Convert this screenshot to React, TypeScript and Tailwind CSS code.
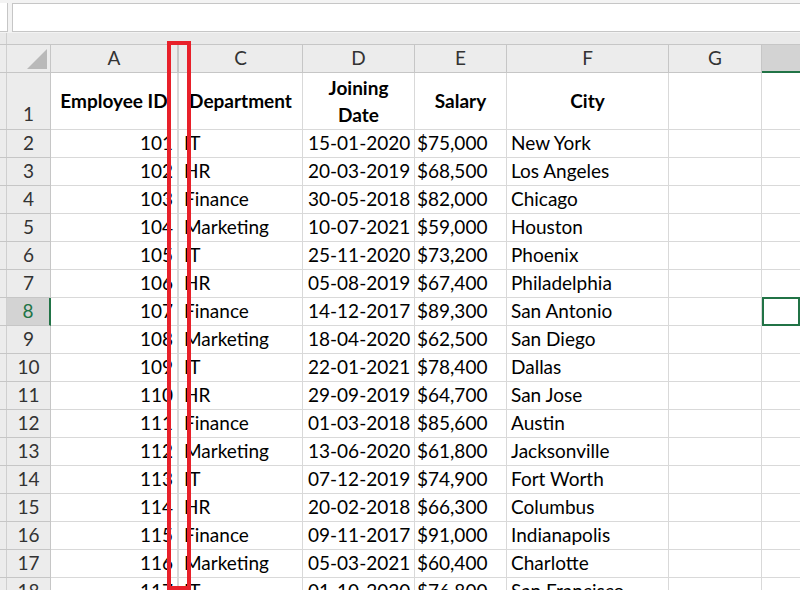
const rows: [number, number, string, string, string, string][] = [
  [2, 101, 'IT', '15-01-2020', '$75,000', 'New York'],
  [3, 102, 'HR', '20-03-2019', '$68,500', 'Los Angeles'],
  [4, 103, 'Finance', '30-05-2018', '$82,000', 'Chicago'],
  [5, 104, 'Marketing', '10-07-2021', '$59,000', 'Houston'],
  [6, 105, 'IT', '25-11-2020', '$73,200', 'Phoenix'],
  [7, 106, 'HR', '05-08-2019', '$67,400', 'Philadelphia'],
  [8, 107, 'Finance', '14-12-2017', '$89,300', 'San Antonio'],
  [9, 108, 'Marketing', '18-04-2020', '$62,500', 'San Diego'],
  [10, 109, 'IT', '22-01-2021', '$78,400', 'Dallas'],
  [11, 110, 'HR', '29-09-2019', '$64,700', 'San Jose'],
  [12, 111, 'Finance', '01-03-2018', '$85,600', 'Austin'],
  [13, 112, 'Marketing', '13-06-2020', '$61,800', 'Jacksonville'],
  [14, 113, 'IT', '07-12-2019', '$74,900', 'Fort Worth'],
  [15, 114, 'HR', '20-02-2018', '$66,300', 'Columbus'],
  [16, 115, 'Finance', '09-11-2017', '$91,000', 'Indianapolis'],
  [17, 116, 'Marketing', '05-03-2021', '$60,400', 'Charlotte'],
  [18, 117, 'IT', '01-10-2020', '$76,800', 'San Francisco'],
]

const cell = 'border-r border-b border-[#d9d9d9] flex items-center overflow-visible whitespace-nowrap'
const colHead = 'border-r border-b border-[#c6c6c6] flex items-center justify-center text-[#333]'

export default function App() {
  return (
    <div
      className="relative w-[800px] h-[590px] overflow-hidden bg-white text-[19px] text-black"
      style={{ fontFamily: 'Lato, "Open Sans", sans-serif' }}
    >
      {/* formula bar */}
      <div className="flex h-[33px] bg-[#f3f3f3] pt-[3px]">
        <div className="w-[8px] h-[29px] bg-white border-r border-b border-[#c6c6c6]" />
        <div className="ml-[4px] flex-1 h-[29px] bg-white border-l border-t border-b border-[#c6c6c6]" />
      </div>
      <div className="h-[11px] bg-[#e9e9e9] flex">
        <div className="w-[7px] border-r border-[#cfcfcf]" />
      </div>

      {/* sheet grid */}
      <div className="grid grid-cols-[51px_127px_125px_112px_92px_162px_93px_1fr] grid-rows-[28px_57px_repeat(17,28px)] border-t border-[#c6c6c6]">
        {/* column headers */}
        <div className="bg-[#ececec] border-r border-b border-[#c6c6c6] flex">
          <div className="w-[7px] border-r border-[#cfcfcf]" />
          <div className="flex-1 flex items-end justify-end pr-[3px] pb-[3px]">
            <svg width="20" height="20" viewBox="0 0 20 20">
              <polygon points="20,0 20,20 0,20" fill="#b9b9b9" />
            </svg>
          </div>
        </div>
        <div className={`${colHead} bg-[#ececec]`}>A</div>
        <div className={`${colHead} bg-[#ececec] border-l`}>C</div>
        <div className={`${colHead} bg-[#ececec]`}>D</div>
        <div className={`${colHead} bg-[#ececec]`}>E</div>
        <div className={`${colHead} bg-[#ececec]`}>F</div>
        <div className={`${colHead} bg-[#ececec]`}>G</div>
        <div className="bg-[#d3d3d3] border-b-2 border-[#217346]" />

        {/* row 1 */}
        <div className="bg-[#ececec] border-r border-b border-[#c6c6c6] flex">
          <div className="w-[7px] border-r border-[#cfcfcf]" />
          <div className="flex-1 flex items-end justify-center pb-[1px] text-[#333]">1</div>
        </div>
        <div className={`${cell} justify-center font-bold`}>Employee ID</div>
        <div className={`${cell} border-l justify-center font-bold`}>Department</div>
        <div className={`${cell} justify-center font-bold text-center leading-[27px]`}>
          Joining
          <br />
          Date
        </div>
        <div className={`${cell} justify-center font-bold`}>Salary</div>
        <div className={`${cell} justify-center font-bold`}>City</div>
        <div className={cell} />
        <div className="border-b border-[#d9d9d9]" />

        {rows.map(([n, id, dept, date, salary, city]) => {
          const sel = n === 8
          return [
            <div
              key={`h${n}`}
              className={`border-b border-[#c6c6c6] flex ${sel ? 'bg-[#d3d3d3] border-r-2 border-r-[#217346] text-[#217346]' : 'bg-[#ececec] border-r text-[#333]'}`}
            >
              <div className="w-[7px] border-r border-[#cfcfcf] bg-[#ececec]" />
              <div className="flex-1 flex items-center justify-center">{n}</div>
            </div>,
            <div key={`a${n}`} className={`${cell} justify-end pr-[4px]`}>{id}</div>,
            <div key={`c${n}`} className={`${cell} border-l pl-[5px]`}>{dept}</div>,
            <div key={`d${n}`} className={`${cell} pl-[5px]`}>{date}</div>,
            <div key={`e${n}`} className={`${cell} pl-[2px]`}>{salary}</div>,
            <div key={`f${n}`} className={`${cell} pl-[4px]`}>{city}</div>,
            <div key={`g${n}`} className={cell} />,
            <div
              key={`x${n}`}
              className={sel ? 'border-2 border-[#217346] -mt-[1px]' : 'border-b border-[#d9d9d9]'}
            />,
          ]
        })}
      </div>

      {/* red highlight over hidden column B */}
      <div className="absolute left-[167px] top-[41px] w-[24px] h-[549px] border-[4px] border-[#e8202a]" />
    </div>
  )
}
